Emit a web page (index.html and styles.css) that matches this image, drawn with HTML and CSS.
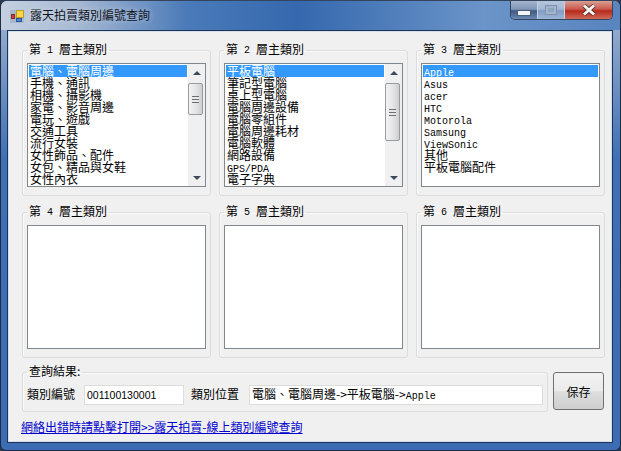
FILE: index.html
```html
<!DOCTYPE html>
<html lang="zh-Hant">
<head>
    <meta charset="UTF-8">
    <title>露天拍賣類別編號查詢</title>
    <link rel="stylesheet" href="styles.css">
</head>
<body>

<div class="window">
    <div class="titlebar">
        <svg class="app-icon" width="16" height="16" viewBox="0 0 16 16">
            <rect x="1" y="2" width="14" height="13" fill="#a9b8cc"/>
            <rect x="7.5" y="2.5" width="7" height="7" fill="#f8d84a" stroke="#c09a28"/>
            <rect x="2.5" y="6.5" width="3" height="4" fill="#d8392a" stroke="#8a2a20"/>
            <rect x="7.5" y="10.5" width="5" height="3" fill="#4f86d8" stroke="#2c5595"/>
        </svg>
        <span class="title">露天拍賣類別編號查詢</span>
        <div class="caption-buttons">
            <div class="cap-btn cap-min"><span class="min-glyph"></span></div>
            <div class="cap-btn cap-max"><span class="max-glyph"></span></div>
            <div class="cap-btn cap-close">
                <svg width="16" height="12" viewBox="0 0 16 12">
                    <path d="M3 1.5 L13 10.5 M13 1.5 L3 10.5" stroke="#5a2a26" stroke-width="4.4"/>
                    <path d="M3 1.5 L13 10.5 M13 1.5 L3 10.5" stroke="#f4f4f4" stroke-width="3"/>
                </svg>
            </div>
        </div>
    </div>

    <div class="client">
        <div class="groups">
            <fieldset class="group">
                <legend>第<i class="num">1</i>層主類別</legend>
                <div class="listbox">
                    <div class="items">
                        <div class="item selected">電腦、電腦周邊</div>
                        <div class="item">手機、通訊</div>
                        <div class="item">相機、攝影機</div>
                        <div class="item">家電、影音周邊</div>
                        <div class="item">電玩、遊戲</div>
                        <div class="item">交通工具</div>
                        <div class="item">流行女裝</div>
                        <div class="item">女性飾品、配件</div>
                        <div class="item">女包、精品與女鞋</div>
                        <div class="item">女性內衣</div>
                    </div>
                    <div class="scrollbar">
                        <div class="arrow arrow-up"></div>
                        <div class="track">
                            <div class="thumb thumb-short"><span class="grip"></span></div>
                        </div>
                        <div class="arrow arrow-down"></div>
                    </div>
                </div>
            </fieldset>

            <fieldset class="group">
                <legend>第<i class="num">2</i>層主類別</legend>
                <div class="listbox">
                    <div class="items">
                        <div class="item selected">平板電腦</div>
                        <div class="item">筆記型電腦</div>
                        <div class="item">桌上型電腦</div>
                        <div class="item">電腦周邊設備</div>
                        <div class="item">電腦零組件</div>
                        <div class="item">電腦周邊耗材</div>
                        <div class="item">電腦軟體</div>
                        <div class="item">網路設備</div>
                        <div class="item"><span class="latin">GPS/PDA</span></div>
                        <div class="item">電子字典</div>
                    </div>
                    <div class="scrollbar">
                        <div class="arrow arrow-up"></div>
                        <div class="track">
                            <div class="thumb thumb-long"><span class="grip"></span></div>
                        </div>
                        <div class="arrow arrow-down"></div>
                    </div>
                </div>
            </fieldset>

            <fieldset class="group">
                <legend>第<i class="num">3</i>層主類別</legend>
                <div class="listbox">
                    <div class="items">
                        <div class="item selected"><span class="latin">Apple</span></div>
                        <div class="item"><span class="latin">Asus</span></div>
                        <div class="item"><span class="latin">acer</span></div>
                        <div class="item"><span class="latin">HTC</span></div>
                        <div class="item"><span class="latin">Motorola</span></div>
                        <div class="item"><span class="latin">Samsung</span></div>
                        <div class="item"><span class="latin">ViewSonic</span></div>
                        <div class="item">其他</div>
                        <div class="item">平板電腦配件</div>
                    </div>
                </div>
            </fieldset>

            <fieldset class="group">
                <legend>第<i class="num">4</i>層主類別</legend>
                <div class="listbox"></div>
            </fieldset>

            <fieldset class="group">
                <legend>第<i class="num">5</i>層主類別</legend>
                <div class="listbox"></div>
            </fieldset>

            <fieldset class="group">
                <legend>第<i class="num">6</i>層主類別</legend>
                <div class="listbox"></div>
            </fieldset>
        </div>

        <div class="result-row">
            <fieldset class="result">
                <legend>查詢結果:</legend>
                <label class="field-label">類別編號</label>
                <input class="field field-id" type="text" value="001100130001">
                <label class="field-label field-label-path">類別位置</label>
                <div class="field field-path">電腦、電腦周邊-&gt;平板電腦-&gt;<span class="latin">Apple</span></div>
            </fieldset>
            <button class="save" type="button">保存</button>
        </div>

        <a class="link" href="#">網絡出錯時請點擊打開&gt;&gt;露天拍賣-線上類別編號查詢</a>
    </div>
</div>

</body>
</html>
```

FILE: styles.css
```css
* {
    box-sizing: border-box;
}

html,
body {
    margin: 0;
    height: 100%;
    overflow: hidden;
}

body {
    font-family: "Noto Sans CJK TC", "Liberation Sans", sans-serif;
    font-size: 12px;
    color: #000;
    background-color: #2a3a50;
}

.window {
    width: 621px;
    height: 451px;
    display: flex;
    flex-direction: column;
    padding: 0 7px 7px 6px;
    border-radius: 7px 7px 6px 6px;
    border: 1px solid #1c2c44;
    border-top-color: #33445c;
    background: linear-gradient(180deg, #a4b6d0 0%, #3f70b6 35%, #3b6cb4 100%);
}

/* title bar */
.titlebar {
    height: 29px;
    margin: 0 -7px 0 -6px;
    padding: 0 7px 0 6px;
    display: flex;
    align-items: flex-start;
    border-radius: 6px 6px 0 0;
    background: linear-gradient(90deg, #c4d0e0 0%, #a8bad4 12%, #4a7ab8 30%, #3568ae 48%, #6b94c8 78%, #5884bf 100%);
}

.app-icon {
    margin: 7px 0 0 2px;
}

.title {
    margin: 5px 0 0 5px;
    font-size: 12px;
    line-height: 18px;
    color: #10141c;
    text-shadow: 0 0 6px rgba(255, 255, 255, 0.55);
}

.caption-buttons {
    margin-left: auto;
    display: flex;
    height: 19px;
    border: 1px solid #33465f;
    border-top: none;
    border-radius: 0 0 5px 5px;
    overflow: hidden;
}

.cap-btn {
    display: flex;
    align-items: center;
    justify-content: center;
    border-right: 1px solid #c4d2e4;
}

.cap-min {
    width: 27px;
    background: linear-gradient(180deg, #a4b4cc 0%, #8397b8 45%, #3f5a85 55%, #6c88b0 100%);
}

.cap-max {
    width: 27px;
    background: linear-gradient(180deg, #b4c6dc 0%, #a2b8d4 45%, #7f9cc2 55%, #9db6d6 100%);
}

.cap-close {
    width: 47px;
    border-right: none;
    background: linear-gradient(180deg, #d8a094 0%, #c9584a 45%, #b62a1c 55%, #cf6a5a 100%);
}

.min-glyph {
    width: 12px;
    height: 4px;
    margin-top: 5px;
    background-color: #f4f4f4;
    box-shadow: 0 0 0 1px #4a5f7c;
}

.max-glyph {
    width: 10px;
    height: 8px;
    border: 2px solid #a4b4ca;
    background-color: #8ea6c6;
    box-shadow: 0 0 0 1px #7d93b0;
}

/* client area */
.client {
    flex: 1;
    padding: 12px 6px 0 14px;
    background-color: #f0f0f0;
    border: 1px solid #1d3358;
    outline: 1px solid #d4dfec;
    outline-offset: -2px;
    display: flex;
    flex-direction: column;
}

.groups {
    display: grid;
    grid-template-columns: repeat(3, 189px);
    grid-template-rows: 153px 153px;
    column-gap: 8px;
    row-gap: 9px;
}

fieldset {
    margin: 0;
    min-width: 0;
    border: 1px solid #dcdcdc;
    border-radius: 3px;
    box-shadow: inset 1px 1px 0 #fbfbfb;
}

legend {
    height: 14px;
    padding: 0 2px;
    font-size: 12px;
    line-height: 12px;
    white-space: nowrap;
}

.num {
    display: inline-block;
    width: 18px;
    height: 14px;
    overflow: hidden;
    text-align: center;
    font-style: normal;
    font-family: "Liberation Mono", monospace;
    font-size: 10px;
    line-height: 15px;
    vertical-align: top;
}

.group {
    padding: 6px 4px 8px 4px;
}

.listbox {
    height: 124px;
    display: flex;
    background-color: #fff;
    border: 1px solid #82878c;
    padding: 1px;
    overflow: hidden;
}

.items {
    flex: 1;
    min-width: 0;
}

.item {
    height: 12px;
    padding-left: 1px;
    line-height: 11px;
    font-size: 12px;
    white-space: nowrap;
}

.item.selected {
    background-color: #3399ff;
    color: #fff;
}

.latin {
    font-family: "Liberation Mono", monospace;
    font-size: 10px;
}

/* listbox scrollbar */
.scrollbar {
    width: 17px;
    margin: -1px -1px -1px 1px;
    display: flex;
    flex-direction: column;
    background-color: #f0f0f0;
}

.arrow {
    height: 17px;
    display: flex;
    align-items: center;
    justify-content: center;
}

.arrow::before {
    content: "";
    border-left: 4px solid transparent;
    border-right: 4px solid transparent;
}

.arrow-up::before {
    border-bottom: 4px solid #3c4a5c;
}

.arrow-down::before {
    border-top: 4px solid #3c4a5c;
}

.track {
    flex: 1;
    padding-top: 2px;
}

.thumb {
    width: 15px;
    display: flex;
    align-items: center;
    justify-content: center;
    border: 1px solid #979a9e;
    border-radius: 2px;
    background: linear-gradient(90deg, #f2f2f2 0%, #e6e6e6 50%, #cfcfcf 100%);
}

.thumb-short {
    height: 32px;
}

.thumb-long {
    height: 58px;
}

.grip {
    width: 7px;
    height: 7px;
    background: repeating-linear-gradient(180deg, #6e6e6e 0, #6e6e6e 1px, #e8e8e8 1px, #e8e8e8 3px);
}

/* bottom */
.result-row {
    display: flex;
    align-items: flex-start;
    gap: 5px;
    margin-top: 7px;
}

.result {
    width: 526px;
    height: 47px;
    padding: 0 4px;
    display: flex;
    align-items: center;
}

.field-label {
    padding-bottom: 3px;
    white-space: nowrap;
}

.field {
    height: 20px;
    border: 1px solid #dcdcdc;
    background-color: #fff;
    font-family: "Noto Sans CJK TC", sans-serif;
    font-size: 12px;
    line-height: 16px;
    padding: 0 2px;
    white-space: nowrap;
}

.field-id {
    width: 100px;
    margin-left: 9px;
    font-family: "Liberation Sans", sans-serif;
    font-size: 10.5px;
    color: #000;
    outline: none;
}

.field-label-path {
    margin-left: 7px;
}

.field-path {
    width: 294px;
    margin-left: 10px;
}

.save {
    width: 51px;
    height: 38px;
    margin-top: 7px;
    border: 1px solid #707070;
    border-radius: 3px;
    font-family: inherit;
    font-size: 12px;
    color: #000;
    background: linear-gradient(180deg, #f2f2f2 0%, #ebebeb 50%, #dddddd 52%, #cfcfcf 100%);
}

.link {
    margin: 7px 0 0 -1px;
    font-size: 12px;
    line-height: 15px;
    color: #0000cc;
    text-decoration: underline;
}
```
